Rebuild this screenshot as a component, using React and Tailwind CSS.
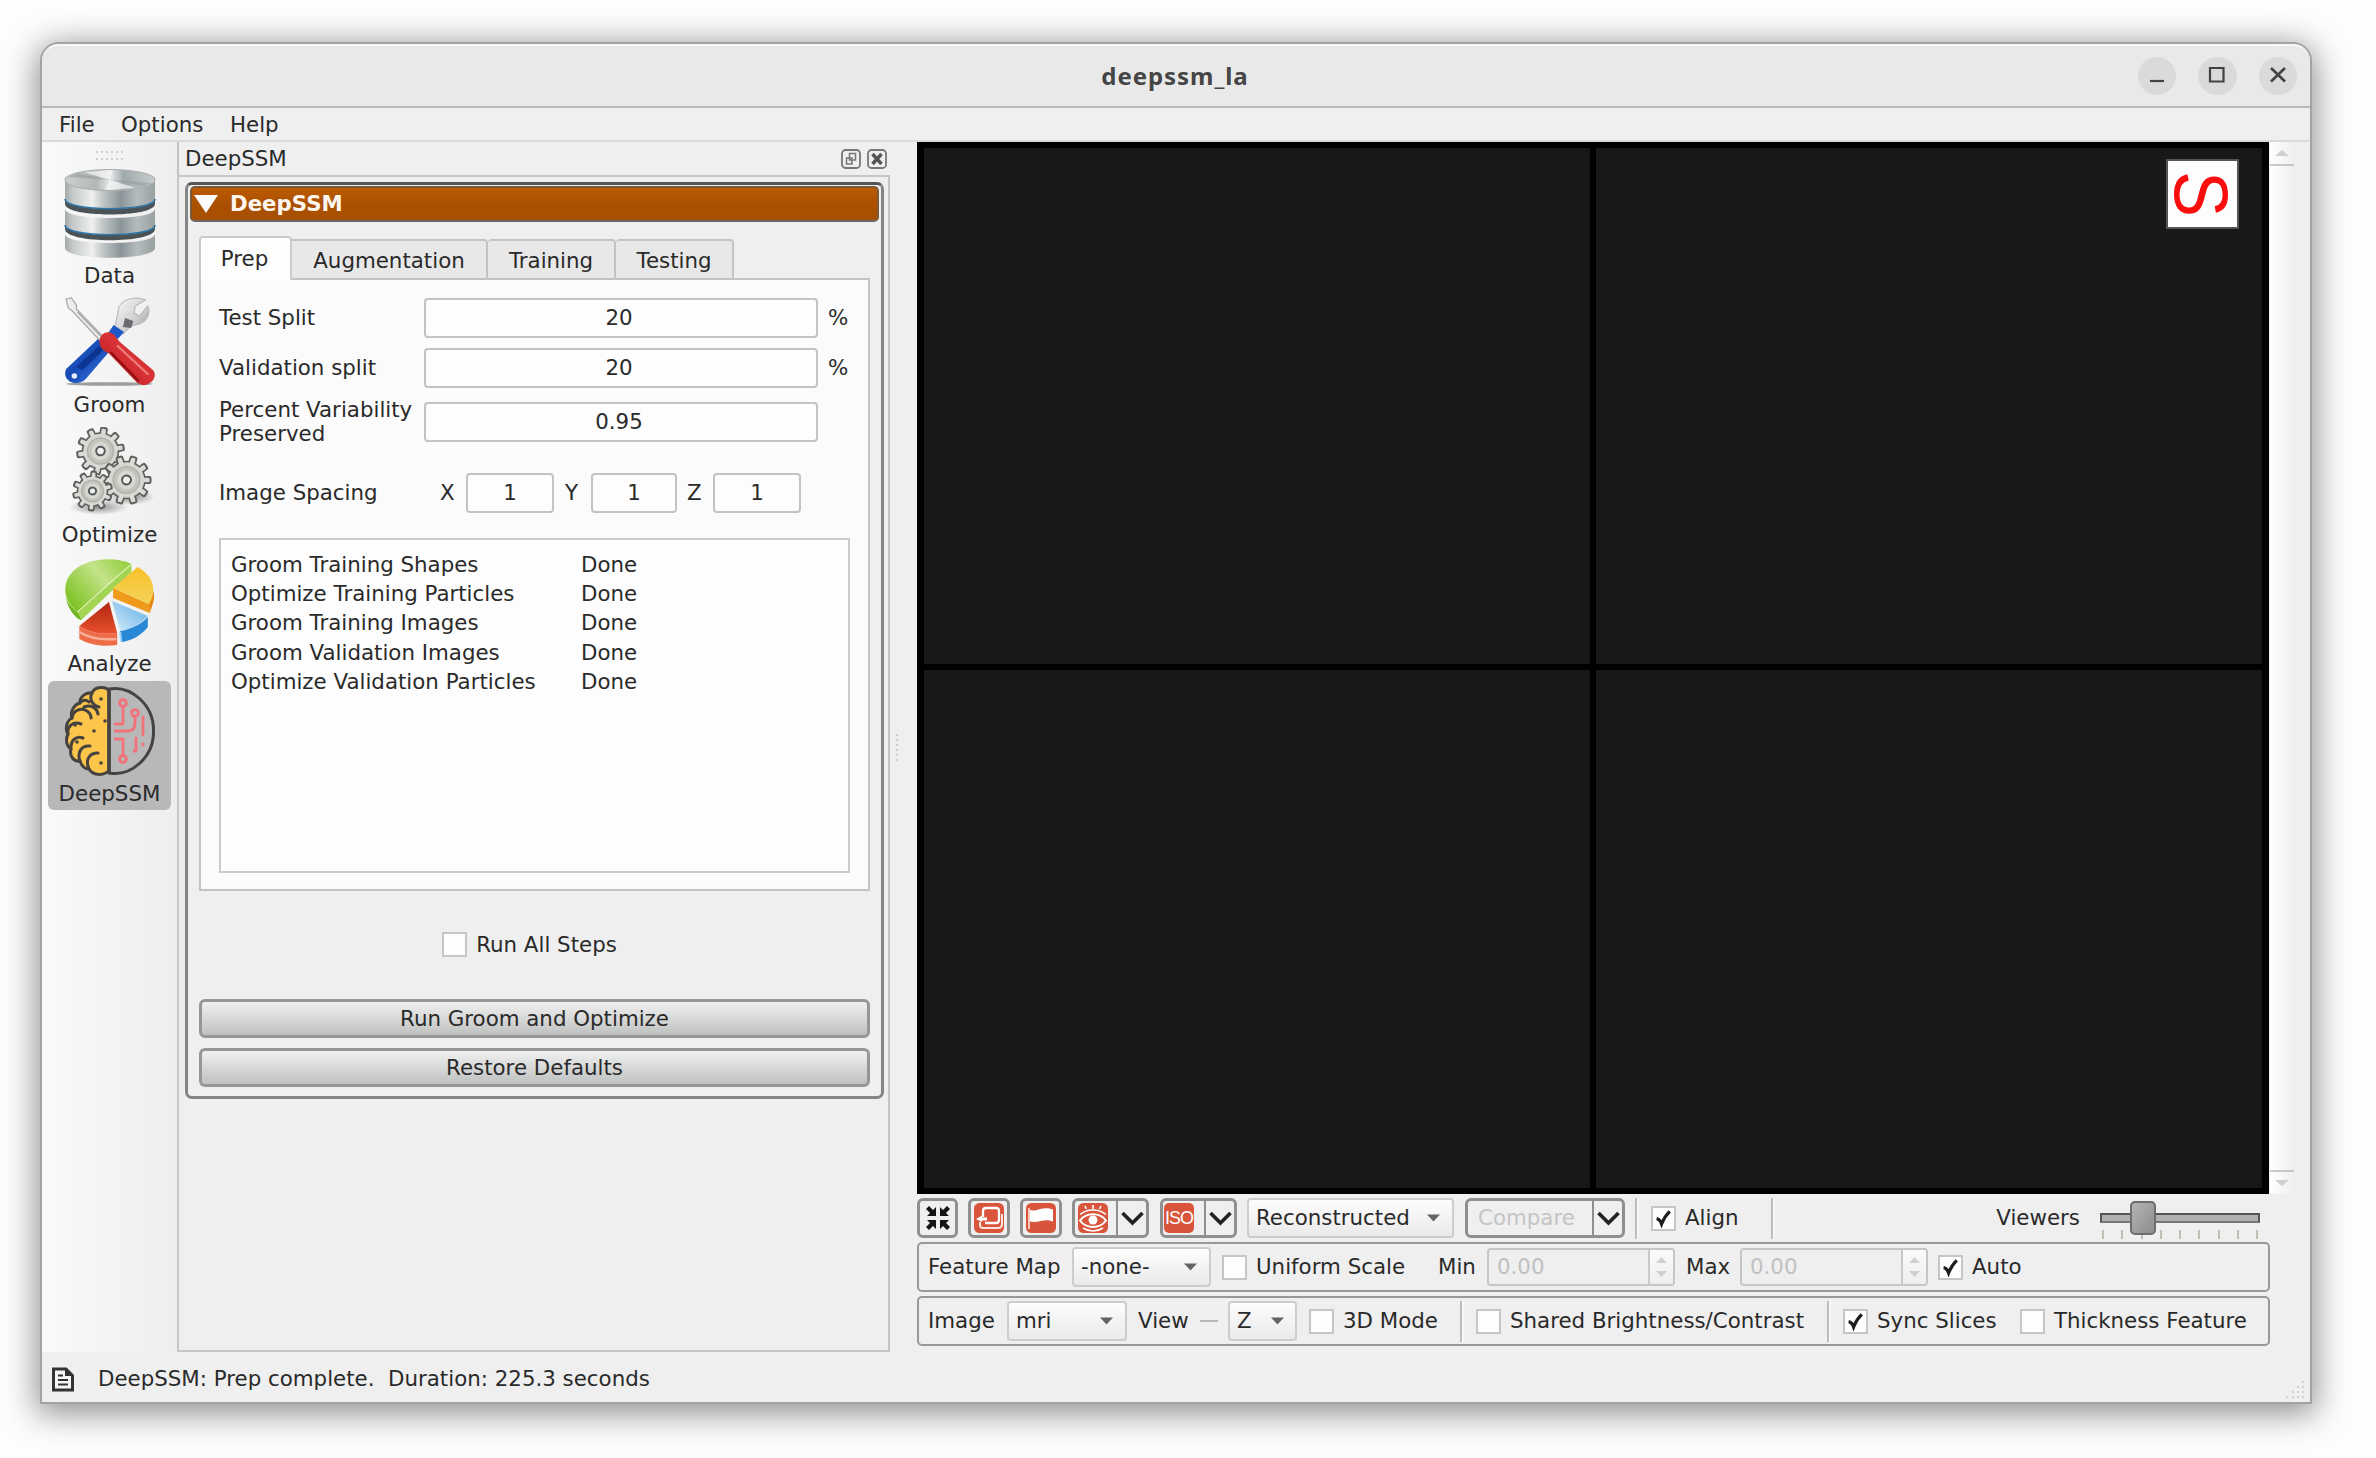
import React from "react";

/* ---------- toolbar artwork ---------- */

function DataIcon() {
  const tier = (y, h) => (
    <path d={`M1 ${y} V${y + h} C1 ${y + h + 13} 89 ${y + h + 13} 89 ${y + h} V${y} C89 ${y + 12} 1 ${y + 12} 1 ${y}Z`} fill="url(#steel)" />
  );
  return (
    <svg className="h-[90px] w-[92px]" viewBox="0 0 90 90" preserveAspectRatio="none">
      <defs>
        <linearGradient id="steel" x1="0" x2="1">
          <stop offset="0" stopColor="#a3a8a8" />
          <stop offset=".08" stopColor="#c4c8c8" />
          <stop offset=".3" stopColor="#eef0ef" />
          <stop offset=".42" stopColor="#c2c7c7" />
          <stop offset=".62" stopColor="#8a9498" />
          <stop offset=".8" stopColor="#b5bcbd" />
          <stop offset="1" stopColor="#9aa0a0" />
        </linearGradient>
        <linearGradient id="lid" x1="0" x2="1">
          <stop offset="0" stopColor="#cdd0cf" />
          <stop offset=".35" stopColor="#b3b7b6" />
          <stop offset=".5" stopColor="#e9ebea" />
          <stop offset=".65" stopColor="#9fa9ac" />
          <stop offset="1" stopColor="#c9cece" />
        </linearGradient>
      </defs>
      {tier(66, 14)}
      <path d="M1 57 C1 70 89 70 89 57 V61 C89 76 1 76 1 61Z" fill="#4b5357" />
      {tier(41, 16)}
      <path d="M1 57 C1 70 89 70 89 57" fill="none" stroke="#2f76a8" strokeWidth="1.6" />
      <path d="M1 31 C1 44 89 44 89 31 V36 C89 50 1 50 1 36Z" fill="#4b5357" />
      {tier(12, 19)}
      <path d="M1 31 C1 44 89 44 89 31" fill="none" stroke="#2f76a8" strokeWidth="1.6" />
      <ellipse cx="45" cy="12" rx="44" ry="10.5" fill="url(#lid)" stroke="#a9adad" strokeWidth="1" />
      <path d="M45 12 L20 4 L48 2Z M45 12 L70 20 L40 22Z" fill="#f3f4f4" opacity=".75" />
      <path d="M45 12 L4 9 L14 5Z M45 12 L86 15 L78 18Z" fill="#8e9595" opacity=".5" />
    </svg>
  );
}

function GroomIcon() {
  return (
    <svg className="h-[90px] w-[93px]" viewBox="0 0 90 90" preserveAspectRatio="none">
      <defs>
        <linearGradient id="blueH" x1="0" x2="1" y1="0" y2="1">
          <stop offset="0" stopColor="#3c74dc" />
          <stop offset=".45" stopColor="#1549b4" />
          <stop offset="1" stopColor="#4a86ea" />
        </linearGradient>
        <linearGradient id="redH" x1="1" x2="0" y1="0" y2="1">
          <stop offset="0" stopColor="#b81a1e" />
          <stop offset=".45" stopColor="#d93336" />
          <stop offset="1" stopColor="#b01317" />
        </linearGradient>
        <linearGradient id="chrome" x1="0" x2="1" y1="0" y2="1">
          <stop offset="0" stopColor="#fafafa" />
          <stop offset=".6" stopColor="#cfcfd1" />
          <stop offset="1" stopColor="#8f8f93" />
        </linearGradient>
      </defs>
      <ellipse cx="45" cy="87" rx="42" ry="1.8" fill="#777" opacity=".7" />
      <path d="M50 30 L53 17 C53 6 61 1 73 1 L80 3 L70 9 L69 16 L74 19 L82 9 C85 15 82 24 74 27 L66 29 L58 37Z" fill="url(#chrome)" stroke="#b5b5b8" strokeWidth="1" />
      <path d="M60 21 L68 24 L66 31 L58 30Z" fill="#6a6a70" />
      <path d="M49 28 L59 35 L53 42 L43 37Z" fill="#1f57c6" />
      <path d="M38 38 L52 46 L22 82 C14 91 -2 84 3 72Z" fill="url(#blueH)" />
      <path d="M37 47 L42 50 L19 73 L13 70Z" fill="#0c3491" />
      <circle cx="11" cy="79" r="3.4" fill="#e6efff" stroke="#1b4fb6" strokeWidth="1.5" />
      <path d="M3 2 L8 1 L13 8 L13 12 L42 43 L38 46 L9 14 L5 11Z" fill="#ececec" stroke="#a8a8aa" strokeWidth="1.2" />
      <path d="M14 15 L40 43" stroke="#8b8b8e" strokeWidth="1" />
      <path d="M37 39 C40 34 48 34 51 40 L55 45 L87 73 C92 79 86 88 77 88 L72 86 L44 56 C36 53 33 45 37 39Z" fill="url(#redH)" />
      <path d="M53 49 L82 77" stroke="#ee7c7c" strokeWidth="2.200" strokeLinecap="round" />
      <path d="M46 55 L73 84" stroke="#8f0c10" strokeWidth="2" />
    </svg>
  );
}

function Gear({ cx, cy, r, turn = 0 }) {
  const teeth = [0, 36, 72, 108, 144, 180, 216, 252, 288, 324];
  return (
    <g transform={`translate(${cx} ${cy}) rotate(${turn})`}>
      {teeth.map((a) => (
        <rect key={a} x={-r * 0.16} y={-r * 1.3} width={r * 0.32} height={r * 0.5} rx="1.2" fill="#d9dbd5" stroke="#5d605e" strokeWidth="2" transform={`rotate(${a})`} />
      ))}
      <circle r={r} fill="#d4d6cf" stroke="#5d605e" strokeWidth="1.6" />
      {teeth.map((a) => (
        <rect key={a} x={-r * 0.12} y={-r * 1.18} width={r * 0.24} height={r * 0.4} fill="#d9dbd5" transform={`rotate(${a})`} />
      ))}
      <circle r={r * 0.72} fill="#c3c6bd" stroke="#b0b3ab" strokeWidth="1.5" />
      <circle r={r * 0.5} fill="#d7d9d2" />
      <circle r={r * 0.24} fill="#f1f1f1" stroke="#555957" strokeWidth="2" />
    </g>
  );
}

function OptimizeIcon() {
  return (
    <svg className="h-[90px] w-[91px]" viewBox="0 0 90 90">
      <defs>
        <radialGradient id="gshadow">
          <stop offset="0" stopColor="#777" stopOpacity=".8" />
          <stop offset="1" stopColor="#777" stopOpacity="0" />
        </radialGradient>
      </defs>
      <ellipse cx="34" cy="80" rx="30" ry="8" fill="url(#gshadow)" />
      <ellipse cx="66" cy="70" rx="24" ry="8" fill="url(#gshadow)" />
      <Gear cx={36} cy={24} r={18} turn={9} />
      <Gear cx={62} cy={53} r={18.500} turn={18} />
      <Gear cx={28} cy={64} r={15} turn={4} />
    </svg>
  );
}

function AnalyzeIcon() {
  return (
    <svg className="mt-[3px] mb-[-3px] h-[90px] w-[92px]" viewBox="0 0 90 90" preserveAspectRatio="none">
      <defs>
        <linearGradient id="pg" x1="0" x2="1" y1=".7" y2="0">
          <stop offset="0" stopColor="#80c326" />
          <stop offset=".55" stopColor="#c3e388" />
          <stop offset="1" stopColor="#8ccb33" />
        </linearGradient>
        <linearGradient id="po" x1="0" x2="0" y1="0" y2="1">
          <stop offset="0" stopColor="#f9c02a" />
          <stop offset="1" stopColor="#f2d35a" />
        </linearGradient>
        <linearGradient id="pr" x1="0" x2="0" y1="0" y2="1">
          <stop offset="0" stopColor="#b02510" />
          <stop offset="1" stopColor="#e8512c" />
        </linearGradient>
        <linearGradient id="pb" x1="0" x2="1" y1="1" y2="0">
          <stop offset="0" stopColor="#d3ebfa" />
          <stop offset="1" stopColor="#5eaee6" />
        </linearGradient>
      </defs>
      <path d="M13 53 L66 5 V13 L17 61 C15 60 13 59 12 57Z" fill="#a4d453" />
      <path d="M13 53 C-7 36 0 12 22 4 C36 -1 54 -1 66 5Z" fill="url(#pg)" />
      <path d="M1 32 C2 46 7 54 14 60 L17 61 L13 53 C5 46 1 40 1 32Z" fill="#6fb51e" />
      <path d="M13 53 L66 5" stroke="#eef8d4" strokeWidth="1" />
      <path d="M48 29 L83 45 L84 54 L48 39Z" fill="#f09a1c" />
      <path d="M83 45 L88 32 L88 41 L84 54Z" fill="#e88410" />
      <path d="M48 29 L72 8 C88 17 91 32 83 45Z" fill="url(#po)" />
      <path d="M15 67 C26 74 38 76 52 74 V86 C38 88 25 86 15 80Z" fill="#ef6c49" />
      <path d="M15 73 C26 80 38 81 51 80" stroke="#f9b09a" strokeWidth="2.5" fill="none" />
      <path d="M44 43 L52 74 C38 76 26 74 15 67Z" fill="url(#pr)" />
      <path d="M55 72 C65 70 75 66 82 58 V68 C76 76 66 82 56 83Z" fill="#2888d6" />
      <path d="M47 42 L82 57 C75 65 66 70 55 72Z" fill="url(#pb)" />
      <path d="M55 73 L56 83" stroke="#9fd2f5" strokeWidth="2" />
    </svg>
  );
}

function BrainIcon() {
  return (
    <svg className="mt-[-1px] mb-[-1px] ml-[-2px] h-[92px] w-[92px]" viewBox="0 0 92 92" fill="none" strokeLinecap="round" strokeLinejoin="round">
      <path d="M46 6 C43 1 32 1 29 8 C22 7 16 13 17 18 C10 20 7 28 9 33 C3 36 2 45 5 49 C2 55 4 62 8 64 C6 71 11 77 17 76 C19 82 22 84 26 84 C30 91 42 91 46 85Z" fill="#fdc54a" stroke="#454240" strokeWidth="3" />
      <path d="M46 4 C68 0 91 20 90.500 46 C91 72 68 92 46 88Z" stroke="#454240" strokeWidth="3" />
      <path d="M46 4 V88" stroke="#454240" strokeWidth="3" />
      <path d="M17 18 C19 15 23 14 26 17 M29 8 C26 14 29 20 36 22 M9 33 C10 26 17 22 24 26 C27 28 28 30 28 33 M21 22 C28 19 34 23 35 29 M5 49 C4 41 10 36 18 39 M8 64 C7 56 13 50 20 53 M17 76 C14 68 18 60 27 61 M26 84 C22 75 26 68 35 68" stroke="#454240" strokeWidth="3" />
      <g fill="#454240">
        <circle cx="38" cy="14" r="1.8" /><circle cx="42" cy="36" r="1.8" /><circle cx="12" cy="40" r="1.8" />
        <circle cx="31" cy="46" r="1.8" /><circle cx="14" cy="57" r="1.8" /><circle cx="38" cy="78" r="1.8" />
      </g>
      <g stroke="#f2727a" strokeWidth="2.8">
        <circle cx="60" cy="18" r="3.4" /><circle cx="72" cy="28" r="3.4" /><circle cx="60" cy="74" r="3.4" />
        <path d="M60 22 V39 H52 M72 32 V39 C72 44 69 46 65 46 H52 M60 70 V54 H52 M73 53 V66 H71 M80 32 V50 M80 59 V60" />
      </g>
    </svg>
  );
}

/* ---------- small shared widgets ---------- */

function Box({ checked, className = "" }) {
  return (
    <span className={`flex h-[25px] w-[25px] shrink-0 items-center justify-center border-2 border-[#c6c6c6] bg-[#fdfdfd] ${className}`}>
      {checked && (
        <svg className="h-[19px] w-[19px]" viewBox="0 0 19 19">
          <path d="M2.6 9.6 C5 10 6.6 12 7.6 15 C9.5 10 12.5 5.5 15.8 2.4" fill="none" stroke="#1c1c1c" strokeWidth="3.2" />
        </svg>
      )}
    </span>
  );
}

function Select({ children, className = "", pad = "pl-[8px] pr-[13px]" }) {
  return (
    <div className={`flex h-[40px] shrink-0 items-center justify-between rounded-[4px] border-2 border-[#cdcdcd] bg-gradient-to-b from-[#fdfdfd] to-[#eaeaea] ${pad} ${className}`}>
      <span>{children}</span>
      <svg className="h-[8px] w-[13px]" viewBox="0 0 13 8"><path d="M0 .5 H13 L6.5 7.5Z" fill="#646464" /></svg>
    </div>
  );
}

function Spin({ className = "" }) {
  return (
    <div className={`flex h-[38px] w-[188px] shrink-0 overflow-hidden rounded-[4px] border-2 border-[#c6c6c6] text-[#c0c0c0] ${className}`}>
      <span className="flex flex-1 items-center pl-[8px]">0.00</span>
      <span className="flex w-[25px] flex-col items-center justify-center gap-[8px] border-l-2 border-[#c9c9c9] bg-gradient-to-b from-[#fbfbfb] to-[#eeeeee]">
        <svg className="h-[6px] w-[11px]" viewBox="0 0 11 6"><path d="M0 6 H11 L5.5 0Z" fill="#cfcfcf" /></svg>
        <svg className="h-[6px] w-[11px]" viewBox="0 0 11 6"><path d="M0 0 H11 L5.5 6Z" fill="#cfcfcf" /></svg>
      </span>
    </div>
  );
}

function Rule({ className = "" }) {
  return <span className={`h-[41px] w-[4px] shrink-0 border-l-2 border-r-2 border-l-[#bdbdbd] border-r-[#f8f8f8] ${className}`} />;
}

function Frame({ children, className = "" }) {
  return (
    <div className={`flex h-[40px] shrink-0 items-center overflow-hidden rounded-[6px] border-[3px] border-[#8f8f8f] ${className}`}>{children}</div>
  );
}

function Chevron() {
  return (
    <svg className="h-[15px] w-[23px]" viewBox="0 0 23 15"><path d="M1.5 2 L11.5 12 L21.5 2" fill="none" stroke="#222" strokeWidth="3.6" /></svg>
  );
}

function RedTile({ children }) {
  return (
    <svg className="h-[30px] w-[30px] shrink-0" viewBox="0 0 30 30">
      <rect width="30" height="30" rx="5.5" fill="#d8553b" />
      {children}
    </svg>
  );
}

function Field({ value, className = "" }) {
  return (
    <span className={`flex h-[40px] shrink-0 items-center justify-center rounded-[4px] border-2 border-[#c3c3c3] bg-[#fdfdfd] ${className}`}>{value}</span>
  );
}

/* ---------- sections ---------- */

function TitleBar() {
  return (
    <div className="flex h-[64px] shrink-0 items-center rounded-t-[17px] border-t-2 border-b-2 border-t-[#f8f8f8] border-b-[#b9b9b9] bg-[#e9e9e9]">
      <div className="w-[201px] shrink-0" />
      <div className="flex-1 pl-[58px] text-center font-['Noto_Sans'] text-[24px] leading-[30px] font-bold tracking-[0.95px] text-[#454545]">deepssm_la</div>
      <div className="flex w-[261px] shrink-0 items-center justify-end gap-[22px] pr-[13px]">
        {["M8 15 H22", "M8 1 H21.5 V14.500 H8Z", "M8 1 L22 14.500 M22 1 L8 14.500"].map((d, i) => (
          <span key={d} className="flex h-[38.500px] w-[38.500px] items-center justify-center rounded-full bg-[#dadada]">
            <svg className="mb-[2px] h-[16px] w-[30px]" viewBox="0 0 30 16">
              <path d={d} fill="none" stroke="#424242" strokeWidth={i === 2 ? 2.6 : 2.2} transform={i === 0 ? "translate(0 -1)" : undefined} />
            </svg>
          </span>
        ))}
      </div>
    </div>
  );
}

const TOOLS = [
  ["Data", DataIcon],
  ["Groom", GroomIcon],
  ["Optimize", OptimizeIcon],
  ["Analyze", AnalyzeIcon],
  ["DeepSSM", BrainIcon],
];

function Toolbar() {
  return (
    <div className="flex w-[135px] shrink-0 flex-col items-center bg-gradient-to-r from-[#fafafa] to-[#eeeeee] pt-[9px]">
      <div className="grid h-[11px] grid-cols-6 gap-x-[3px] gap-y-[3px]">
        {Array.from({ length: 12 }, (_, i) => <i key={i} className="h-[2px] w-[2px] bg-[#cfcfcf]" />)}
      </div>
      <div className="mt-[1px] flex flex-col">
        {TOOLS.map(([name, Icon]) => (
          <div key={name} className={`flex h-[129.400px] w-[123px] flex-col items-center rounded-[6px] pt-[5px] ${name === "DeepSSM" ? "bg-[#b8b8b8]" : ""}`}>
            <Icon />
            <span className="mt-[4px] leading-[28px]">{name}</span>
          </div>
        ))}
      </div>
    </div>
  );
}

const STEPS = [
  "Groom Training Shapes",
  "Optimize Training Particles",
  "Groom Training Images",
  "Groom Validation Images",
  "Optimize Validation Particles",
];

function PrepPanel() {
  return (
    <div className="flex h-[611px] flex-col border-2 border-t-0 border-[#c3c3c3] bg-[#fbfbfb] pt-[18px] pl-[18px]">
      <div className="flex items-center">
        <span className="w-[205px]">Test Split</span><Field value="20" className="w-[394px] pr-1" /><span className="ml-[10px]">%</span>
      </div>
      <div className="mt-[10px] flex items-center">
        <span className="w-[205px]">Validation split</span><Field value="20" className="w-[394px] pr-1" /><span className="ml-[10px]">%</span>
      </div>
      <div className="mt-[9px] flex h-[50px] items-center">
        <span className="w-[205px] leading-[24px]">Percent Variability<br />Preserved</span><Field value="0.95" className="w-[394px] pr-1" />
      </div>
      <div className="mt-[26px] flex items-center">
        <span className="w-[221px]">Image Spacing</span>
        <span className="w-[26px]">X</span><Field value="1" className="w-[88px]" />
        <span className="ml-[11px] w-[26px]">Y</span><Field value="1" className="w-[86px]" />
        <span className="ml-[10px] w-[26px]">Z</span><Field value="1" className="w-[88px]" />
      </div>
      <div className="mt-[25px] h-[335px] w-[631px] border-2 border-[#cbcbcb] bg-[#fdfdfd] pt-[10px] pl-[10px]">
        {STEPS.map((s) => (
          <div key={s} className="flex h-[29.300px] items-center"><span className="w-[350px]">{s}</span><span>Done</span></div>
        ))}
      </div>
    </div>
  );
}

function PushButton({ children, className = "" }) {
  return (
    <div className={`flex h-[39px] items-center justify-center rounded-[6px] border-[3px] border-[#969696] bg-gradient-to-b from-[#f0f0f0] to-[#bfc1c1] ${className}`}>{children}</div>
  );
}

function Dock() {
  return (
    <div className="flex w-[713px] shrink-0 flex-col">
      <div className="flex h-[33px] shrink-0 items-center border-l-2 border-[#c2c2c2] pl-[6px] pr-[3px]">
        <span className="flex-1">DeepSSM</span>
        <svg className="h-[20px] w-[46px]" viewBox="0 0 46 20" fill="none" stroke="#777">
          <rect x="1" y="1" width="18" height="18" rx="3.500" strokeWidth="1.800" />
          <path d="M8.500 4.500 H14.500 V11 H8.500Z M5.500 9 H11 V15 H5.500Z" strokeWidth="1.500" />
          <rect x="27" y="1" width="18" height="18" rx="3.500" strokeWidth="1.800" />
          <path d="M31.500 5 L40.500 15 M40.500 5 L31.500 15" stroke="#555" strokeWidth="3.400" />
        </svg>
      </div>
      <div className="flex flex-1 flex-col border-2 border-[#c6c6c6] pt-[5px] pr-[4px] pl-[6px]">
        <div className="flex h-[917px] flex-col rounded-[7px] border-[3px] border-[#858585] border-t-[#555555] px-[2px] pt-[1px]">
          <div className="flex h-[36px] shrink-0 items-center rounded-[5px] border-2 border-[#7c5a38] border-b-[#6a6a6a] bg-gradient-to-b from-[#bd5b02] via-[#aa5000] to-[#a85000] pl-[2px] text-[#fdf6ef]">
            <svg className="h-[18px] w-[24px]" viewBox="0 0 24 19" preserveAspectRatio="none"><path d="M0 0 H24 L12 19Z" fill="#fdfdfd" /></svg>
            <span className="ml-[12px] font-bold text-[21.300px]">DeepSSM</span>
          </div>
          <div className="flex flex-1 flex-col px-[9px]">
            <div className="mt-[14px] flex h-[44px] items-end">
              <span className="flex h-[44px] w-[93px] items-center justify-center rounded-t-[4px] border-2 border-b-0 border-[#cbcbcb] bg-[#fdfdfd] pr-[2px]">Prep</span>
              <span className="flex h-[41px] w-[196px] items-center justify-center rounded-tr-[4px] border-y-2 border-r-2 border-[#c3c3c3] bg-[#e8e8e8] pt-[2px]">Augmentation</span>
              <span className="flex h-[41px] w-[128px] items-center justify-center rounded-t-[4px] border-y-2 border-r-2 border-[#c3c3c3] bg-[#e8e8e8] pt-[2px]">Training</span>
              <span className="flex h-[41px] w-[118px] items-center justify-center rounded-t-[4px] border-y-2 border-r-2 border-[#c3c3c3] bg-[#e8e8e8] pt-[2px]">Testing</span>
              <span className="flex-1 border-b-2 border-[#c3c3c3]" />
            </div>
            <PrepPanel />
            <div className="mt-[41px] flex h-[25px] items-center justify-center pr-[10px]">
              <Box /><span className="ml-[9px]">Run All Steps</span>
            </div>
            <PushButton className="mt-[42px]">Run Groom and Optimize</PushButton>
            <PushButton className="mt-[10px]">Restore Defaults</PushButton>
          </div>
        </div>
      </div>
    </div>
  );
}

function Viewports() {
  return (
    <div className="flex h-[1052px] shrink-0">
      <div className="grid w-[1352px] grid-cols-[666px_666px] grid-rows-[516px_518px] gap-x-[6px] gap-y-[6px] bg-black pt-[6px] pl-[7px]">
        <div className="bg-[#181818]" />
        <div className="relative bg-[#181818]">
          <div className="absolute top-[11px] right-[23px] flex h-[70px] w-[73px] items-center justify-center border-2 border-[#555] bg-[#fdfdfd]">
            <span className="mr-[2px] scale-x-[0.9] rotate-90 font-['Liberation_Sans'] text-[76px] leading-[76px] text-[#f90d0d]">S</span>
          </div>
        </div>
        <div className="bg-[#181818]" />
        <div className="bg-[#181818]" />
      </div>
      <div className="ml-[1px] flex w-[24px] flex-col bg-gradient-to-r from-[#fefefe] to-[#efefef]">
        <span className="flex h-[24px] items-center justify-center border-b-2 border-[#c9c9c9]">
          <svg className="h-[6px] w-[14px]" viewBox="0 0 14 6"><path d="M0 6 H14 L7 0Z" fill="#cfcfcf" /></svg>
        </span>
        <span className="flex-1" />
        <span className="flex h-[24px] items-center justify-center border-t-2 border-[#c9c9c9]">
          <svg className="h-[6px] w-[14px]" viewBox="0 0 14 6"><path d="M0 0 H14 L7 6Z" fill="#cfcfcf" /></svg>
        </span>
      </div>
    </div>
  );
}

function ViewerBar() {
  return (
    <div className="mt-[3px] flex h-[42px] shrink-0 items-center">
      <Frame className="w-[41px] justify-center">
        <svg className="h-[26px] w-[26px]" viewBox="0 0 26 26" fill="#151515">
          <path d="M1 4 L4 1 L8 5 L11 2 V11 H2 L5 8Z M25 4 L22 1 L18 5 L15 2 V11 H24 L21 8Z M1 22 L4 25 L8 21 L11 24 V15 H2 L5 18Z M25 22 L22 25 L18 21 L15 24 V15 H24 L21 18Z" />
        </svg>
      </Frame>
      <Frame className="ml-[10px] w-[42px] justify-center">
        <RedTile>
          <path d="M9 14 V8 C9 6 10 5 12 5 H22 C24 5 25 6 25 8 V17 C25 19 24 20 22 20 H11" fill="none" stroke="#fff" strokeWidth="2.300" />
          <path d="M2 16 L8 12.500 V14.500 H13 V17.500 H8 V19Z" fill="#fff" />
          <path d="M6 19 V22 C6 24 7 25 9 25 H24 C27 25 28 24 28 21 V11" fill="none" stroke="#fbe3dd" strokeWidth="2" />
        </RedTile>
      </Frame>
      <Frame className="ml-[10px] w-[42px] justify-center">
        <RedTile>
          <path d="M3 5 V26" stroke="#f7c9bf" strokeWidth="2" />
          <path d="M4 7 C11 9 17 2.500 27 6.500 V18.500 C18 15 13 20.500 4 18.500Z" fill="#fff" />
        </RedTile>
      </Frame>
      <Frame className="ml-[10px] w-[77px]">
        <span className="flex flex-1 items-center pl-[3px]">
          <RedTile>
            <path d="M2 17.500 C8 9 22 9 28 17.500 C22 26 8 26 2 17.500Z" fill="none" stroke="#fff" strokeWidth="2" />
            <circle cx="15" cy="17" r="4.500" fill="#fff" />
            <path d="M2 11.500 C9 5.500 21 5.500 28 11.500 M15 2 V6 M7 3 L8.500 6 M23 3 L21.500 6 M5 25 C11 29 19 29 25 25" fill="none" stroke="#fff" strokeWidth="1.600" />
          </RedTile>
        </span>
        <span className="flex h-full w-[30px] items-center justify-center border-l-2 border-[#8f8f8f]"><Chevron /></span>
      </Frame>
      <Frame className="ml-[11px] w-[77px]">
        <span className="flex flex-1 items-center pl-[1px]">
          <span className="flex h-[30px] w-[30px] items-center justify-center rounded-[5px] bg-[#d8553b] font-['Liberation_Sans'] text-[18px] tracking-[-1px] text-white">ISO</span>
        </span>
        <span className="flex h-full w-[30px] items-center justify-center border-l-2 border-[#8f8f8f]"><Chevron /></span>
      </Frame>
      <Select className="ml-[10px] w-[207px]" pad="pl-[7px] pr-[12px]">Reconstructed</Select>
      <Frame className="ml-[11px] w-[160px]">
        <span className="flex flex-1 items-center pl-[10px] text-[#c4c4c4]">Compare</span>
        <span className="flex h-full w-[30px] items-center justify-center border-l-2 border-[#8f8f8f]"><Chevron /></span>
      </Frame>
      <Rule className="ml-[10px]" />
      <Box checked className="ml-[12px]" />
      <span className="ml-[9px] w-[86px]">Align</span>
      <Rule />
      <span className="flex-1" />
      <span>Viewers</span>
      <div className="relative ml-[20px] mr-[10px] flex h-[42px] w-[160px] flex-col">
        <div className="mt-[16px] h-[10px] border-2 border-[#555] border-b-[#777] bg-[#b0b0b0]" />
        <div className="mt-[7px] flex justify-between px-[2px]">
          {Array.from({ length: 9 }, (_, i) => <i key={i} className="h-[9px] w-[2px] bg-[#bfbfb6]" />)}
        </div>
        <span className="absolute top-[4px] left-[30px] h-[34px] w-[26px] rounded-[5px] border-2 border-[#6d6d6d] bg-gradient-to-br from-[#b5b5b5] to-[#8d8d8d]" />
      </div>
    </div>
  );
}

function Viewer() {
  return (
    <div className="flex w-[1377px] shrink-0 flex-col">
      <Viewports />
      <div className="flex w-[1353px] flex-col">
        <ViewerBar />
        <div className="mt-[3px] flex h-[50px] items-center rounded-[5px] border-2 border-[#989898] pl-[9px]">
          <span className="w-[144px]">Feature Map</span>
          <Select className="w-[139px]" pad="pl-[7px] pr-[12px]">-none-</Select>
          <Box className="ml-[11px]" /><span className="ml-[9px] w-[182px]">Uniform Scale</span>
          <span className="w-[49px]">Min</span><Spin />
          <span className="ml-[11px] w-[54px]">Max</span><Spin />
          <Box checked className="ml-[10px]" /><span className="ml-[9px]">Auto</span>
        </div>
        <div className="mt-[4px] flex h-[50px] items-center rounded-[5px] border-2 border-[#989898] pl-[9px]">
          <span className="w-[79px]">Image</span>
          <Select className="w-[120px]" pad="pl-[7px] pr-[12px]">mri</Select>
          <span className="ml-[11px] w-[62px]">View</span>
          <span className="h-[2px] w-[18px] bg-[#b8b8b8]" />
          <Select className="ml-[10px] w-[69px]" pad="pl-[7px] pr-[11px]">Z</Select>
          <Box className="ml-[12px]" /><span className="ml-[9px] w-[117px]">3D Mode</span>
          <Rule /><Box className="ml-[12px]" /><span className="ml-[9px] w-[317px]">Shared Brightness/Contrast</span>
          <Rule /><Box checked className="ml-[12px]" /><span className="ml-[9px] w-[143px]">Sync Slices</span>
          <Box /><span className="ml-[9px]">Thickness Feature</span>
        </div>
      </div>
    </div>
  );
}

function StatusBar() {
  return (
    <div className="flex h-[50px] shrink-0 items-center pl-[10px] pt-[4px]">
      <svg className="h-[25px] w-[22px]" viewBox="0 0 22 25">
        <path d="M1.500 2 H14 L20.500 8.500 V23 H1.500Z" fill="#f5f5f5" stroke="#333" strokeWidth="3" />
        <path d="M13 1 V9 H21" fill="#333" />
        <path d="M6 8.500 H11 M6 13 H16 M6 17.500 H16" stroke="#333" strokeWidth="2.200" />
      </svg>
      <span className="ml-[24px] flex-1 whitespace-pre">{"DeepSSM: Prep complete.  Duration: 225.3 seconds"}</span>
      <svg className="mr-[4px] mt-[24px] h-[20px] w-[20px]" viewBox="0 0 20 20" fill="#cfcfcf">
        <path d="M16 0h2v2h-2z M11 5h2v2h-2z M16 5h2v2h-2z M6 10h2v2h-2z M11 10h2v2h-2z M16 10h2v2h-2z M0 15h2v2h-2z M6 15h2v2h-2z M11 15h2v2h-2z M16 15h2v2h-2z" />
      </svg>
    </div>
  );
}

export default function App() {
  return (
    <div className="h-[1458px] w-[2376px] overflow-hidden bg-[#fdfdfd] pt-[42px] pl-[40px] font-['DejaVu_Sans',sans-serif] text-[21.350px] leading-[26px] whitespace-nowrap text-[#2a2a2a]">
      <div className="flex h-[1362px] w-[2272px] flex-col rounded-t-[19px] border-2 border-[#a3a3a3] bg-[#efefef] shadow-[0_6px_32px_4px_rgba(0,0,0,0.42)]">
        <TitleBar />
        <div className="flex h-[34px] shrink-0 items-center border-b-2 border-[#dadada] pt-[1px] pl-[17px]">
          <span className="w-[62px]">File</span><span className="w-[109px]">Options</span><span>Help</span>
        </div>
        <div className="flex h-[1210px] shrink-0">
          <Toolbar />
          <Dock />
          <div className="flex w-[27px] shrink-0 items-center justify-center pr-[14px]">
            <div className="flex flex-col gap-[3px]">
              {Array.from({ length: 6 }, (_, i) => <i key={i} className="h-[2px] w-[2px] bg-[#cdcdcd]" />)}
            </div>
          </div>
          <Viewer />
        </div>
        <StatusBar />
      </div>
    </div>
  );
}
